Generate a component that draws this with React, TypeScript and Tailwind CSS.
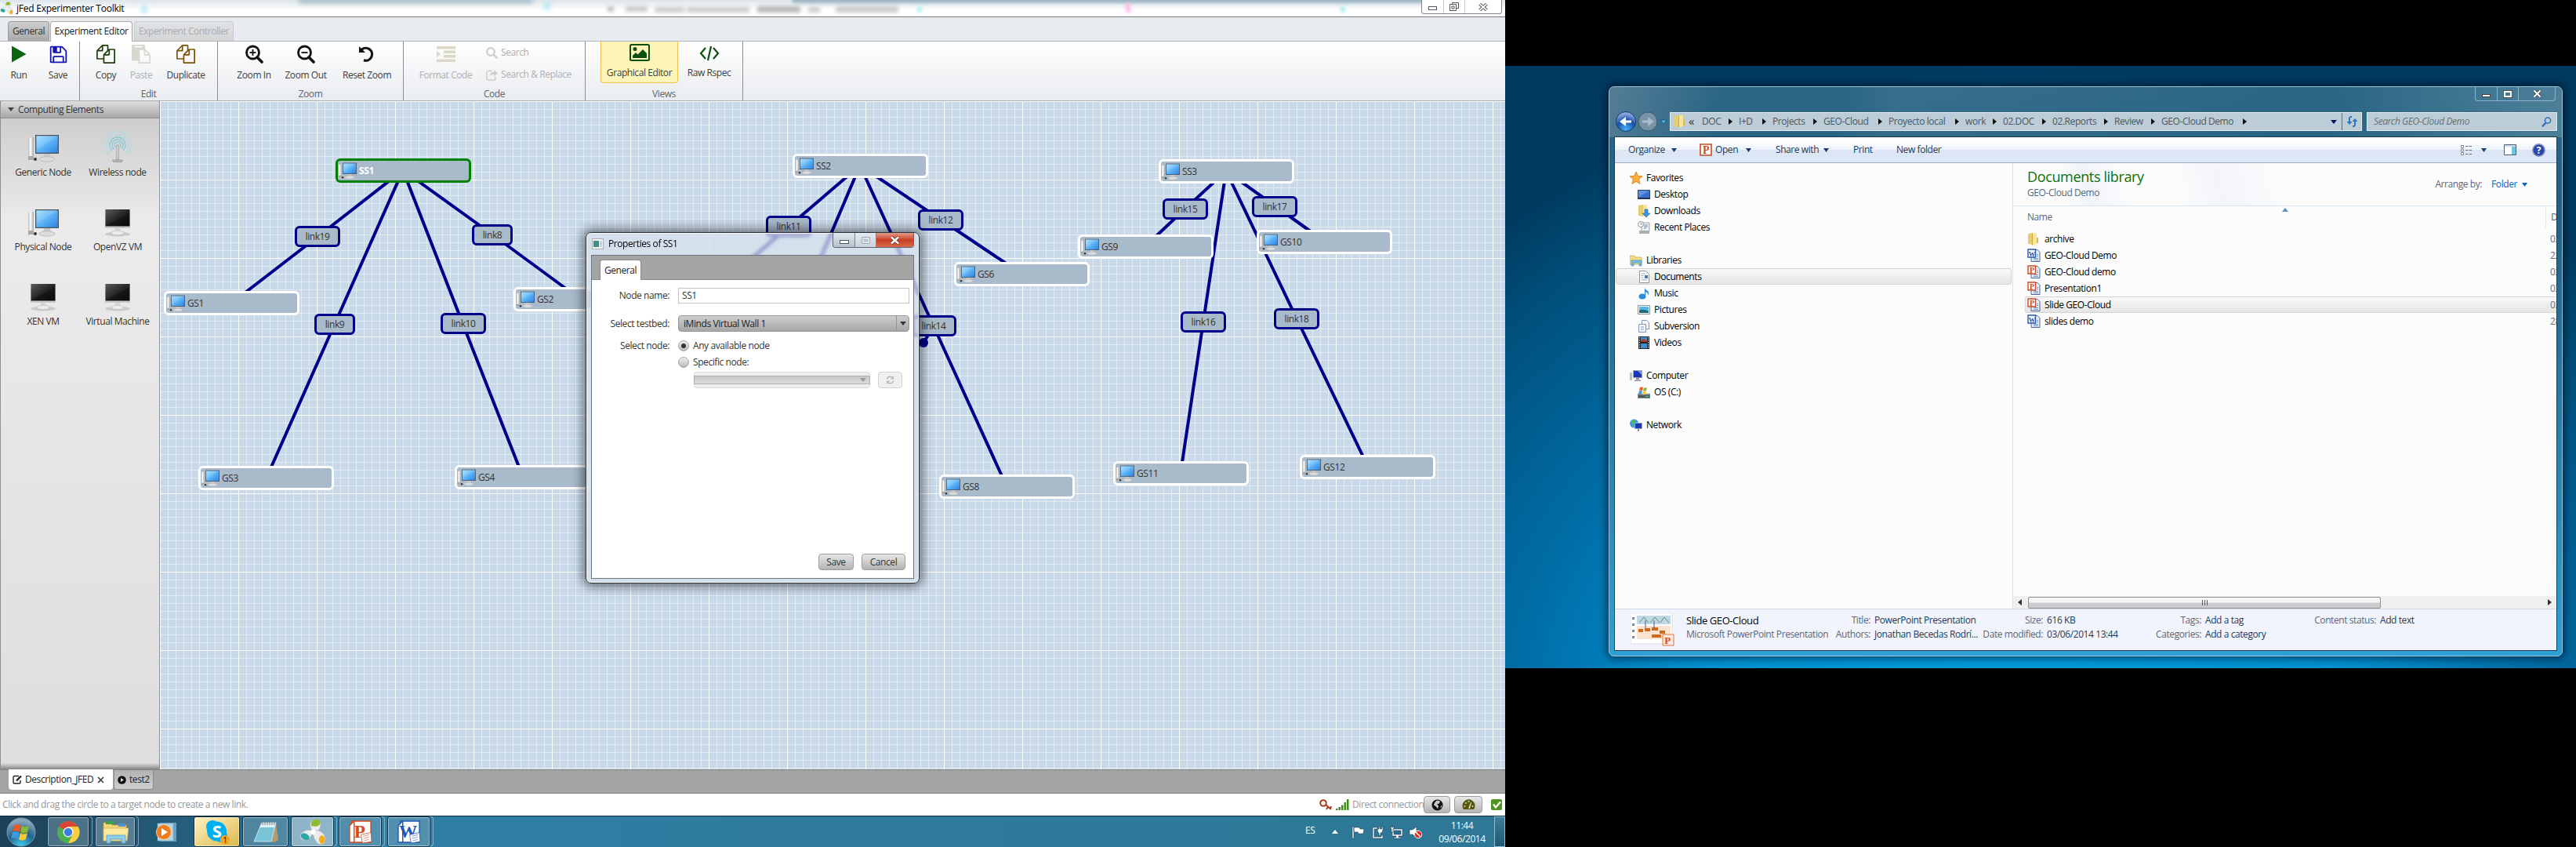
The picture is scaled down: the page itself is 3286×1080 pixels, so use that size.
import React from "react";

/* ---------- shared drawing ---------- */

function ComputerIcon({ size = 40 }: { size?: number }) {
  return (
    <svg width={size} height={size * 0.9} viewBox="0 0 40 36" className="shrink-0">
      <defs>
        <linearGradient id="scr" x1="0" y1="0" x2="1" y2="1">
          <stop offset="0" stopColor="#9fdcff" />
          <stop offset="0.5" stopColor="#5cb4f8" />
          <stop offset="1" stopColor="#2f80e0" />
        </linearGradient>
        <linearGradient id="tower" x1="0" y1="0" x2="1" y2="0">
          <stop offset="0" stopColor="#b8b8b8" />
          <stop offset="0.4" stopColor="#ffffff" />
          <stop offset="1" stopColor="#a8a8a8" />
        </linearGradient>
      </defs>
      <path d="M1 5 L8 4 V33 L1 34 Z" fill="url(#tower)" />
      <path d="M1 28h6v5H1z" fill="#a8a8a8" />
      <circle cx="10" cy="32" r="2" fill="#333" />
      <path d="M21 25h8l1 6H20z" fill="#c8c8c8" />
      <ellipse cx="25" cy="32" rx="10" ry="3.2" fill="#dcdcdc" stroke="#aaa" strokeWidth=".6" />
      <path d="M10 1h30v24H10z" fill="#4c545c" />
      <path d="M11.300 2.300h27.400v21.400h-27.400z" fill="url(#scr)" />
      <path d="M11.500 2.500h27L11.500 20z" fill="#fff" opacity=".12" />
    </svg>
  );
}

function DarkMonitor() {
  return (
    <svg width="34" height="36" viewBox="0 0 34 36">
      <defs>
        <linearGradient id="dk" x1="0" y1="0" x2="1" y2="1">
          <stop offset="0" stopColor="#5c5d55" />
          <stop offset="0.5" stopColor="#262626" />
          <stop offset="1" stopColor="#101010" />
        </linearGradient>
      </defs>
      <ellipse cx="17" cy="32.500" rx="16" ry="3" fill="#bdbdbd" opacity=".7" />
      <path d="M1 1h32v24H1z" fill="#c8c8c8" />
      <path d="M1.500 1h31v21.500h-31z" fill="url(#dk)" />
      <path d="M2 22 L32 5V22z" fill="#000" opacity=".35" />
      <path d="M14 25h6v4h-6z" fill="#d6d6d6" />
      <ellipse cx="17" cy="31" rx="8" ry="2.800" fill="#ececec" stroke="#b5b5b5" strokeWidth=".6" />
    </svg>
  );
}

function WirelessIcon() {
  return (
    <svg width="36" height="40" viewBox="0 0 36 40" fill="none">
      {[4, 7, 10, 13.500, 17].map((r, i) => (
        <path
          key={r}
          d={`M${18 - r * 0.7} ${18 + r * 0.7}A${r} ${r} 0 1 1 ${18 + r * 0.7} ${18 + r * 0.7}`}
          stroke={i > 2 ? "#a5dbe6" : "#7ccbdb"}
          strokeWidth="1.100"
          strokeDasharray={i > 2 ? "3 1" : undefined}
        />
      ))}
      <path d="M16.800 18h2.500v18.500h-2.500z" fill="#d6d6dd" stroke="#85858f" strokeWidth=".6" />
      <path d="M11.500 37h13l-1 2.500h-11z" fill="#b9b9c2" stroke="#777" strokeWidth=".5" />
    </svg>
  );
}

const FILES =
  "M1696 384q40 0 68 28t28 68v1216q0 40-28 68t-68 28h-960q-40 0-68-28t-28-68v-288h-544q-40 0-68-28t-28-68v-672q0-40 20-88t48-76l408-408q28-28 76-48t88-20h416q40 0 68 28t28 68v328q68-40 128-40h416zm-544 213l-299 299h299v-299zm-640-384l-299 299h299v-299zm196 647l316-316v-416h-384v416q0 40-28 68t-68 28h-416v640h512v-256q0-40 20-88t48-76zm956 804v-1152h-384v416q0 40-28 68t-68 28h-416v640h896z";
const FLOPPY =
  "M512 1536h768v-384h-768v384zm896 0h128v-896q0-14-10-38.500t-20-34.500l-281-281q-10-10-34-20t-39-10v416q0 40-28 68t-68 28h-576q-40 0-68-28t-28-68v-416h-128v1280h128v-416q0-40 28-68t68-28h832q40 0 68 28t28 68v416zm-384-928v-320q0-13-9.500-22.500t-22.500-9.500h-192q-13 0-22.500 9.500t-9.500 22.500v320q0 13 9.500 22.500t22.500 9.500h192q13 0 22.500-9.500t9.500-22.500zm640 32v928q0 40-28 68t-68 28h-1344q-40 0-68-28t-28-68v-1344q0-40 28-68t68-28h928q40 0 88 20t76 48l280 280q28 28 48 76t20 88z";
const PASTE =
  "M768 1664h896v-640h-416q-40 0-68-28t-28-68v-416h-384v1152zm256-1440v-64q0-13-9.500-22.500t-22.500-9.500h-704q-13 0-22.500 9.500t-9.500 22.500v64q0 13 9.500 22.500t22.500 9.500h704q13 0 22.500-9.500t9.500-22.500zm256 672h299l-299-299v299zm512 128v672q0 40-28 68t-68 28h-960q-40 0-68-28t-28-68v-160h-544q-40 0-68-28t-28-68v-1344q0-40 28-68t68-28h1088q40 0 68 28t28 68v328q21 13 36 28l408 408q28 28 48 76t20 88z";

function Glyph({ d, color, size = 24 }: { d: string; color: string; size?: number }) {
  return (
    <svg width={size} height={size} viewBox="0 0 1792 1792">
      <path d={d} fill={color} />
    </svg>
  );
}

function Magnifier({ sign }: { sign: "plus" | "minus" }) {
  return (
    <svg width="24" height="24" viewBox="0 0 24 24" fill="none" stroke="#111">
      <circle cx="10.500" cy="10" r="8" strokeWidth="2.800" />
      <path d="M16 16l6 6" strokeWidth="3.600" strokeLinecap="round" />
      <path d="M6.500 10h8" strokeWidth="1.800" />
      {sign === "plus" && <path d="M10.500 6v8" strokeWidth="1.800" />}
    </svg>
  );
}

function Down({ color = "#1e3a6b", w = 7 }: { color?: string; w?: number }) {
  return (
    <svg width={w} height="5" viewBox="0 0 7 5" preserveAspectRatio="none" className="shrink-0">
      <path d="M0 0h7L3.500 5z" fill={color} />
    </svg>
  );
}

function JfedLogo({ size = 18 }: { size?: number }) {
  return (
    <svg width={size} height={size} viewBox="0 0 32 32" className="relative shrink-0">
      <g stroke="#b5b5b5" strokeWidth=".7" fill="#ececef">
        <path d="M14 12C11 5 15 1 19 1c6 0 8 6 5 11-2 4-7 5-10 0z" />
        <path d="M15 15c0 7-4 11-8 11-6 0-8-6-4-9 3-3 9-5 12-2z" />
        <path d="M17 14c7-1 13 3 14 9 1 7-4 9-8 7-5-3-8-12-6-16z" />
      </g>
      <circle cx="16.500" cy="16" r="3" fill="#fff" />
      <path d="M14.500 9C13 4 16 1 19.500 1c3 0 6 1 5.500 5-3 4-7 3-10.500 3z" fill="#8dbb2c" />
      <ellipse cx="7" cy="21.500" rx="5.500" ry="3.800" fill="#28a8a8" transform="rotate(25 7 21)" />
      <ellipse cx="27" cy="25" rx="3.600" ry="5" fill="#f4ab18" />
    </svg>
  );
}

/* ---------- ribbon ---------- */

function Tool({
  label,
  w,
  children,
  dim,
}: {
  label: string;
  w: string;
  children: React.ReactNode;
  dim?: boolean;
}) {
  return (
    <div className={`flex flex-col items-center pt-1 ${w}`}>
      <div className="flex h-6 items-center justify-center">{children}</div>
      <span className={`mt-1.5 whitespace-nowrap leading-[17px] ${dim ? "text-[#adb0b3]" : "text-[#3c4043]"}`}>{label}</span>
    </div>
  );
}

function Group({ w, label, children }: { w: string; label?: string; children: React.ReactNode }) {
  return (
    <div className={`flex h-full flex-col justify-between border-r border-[#8b8e93] ${w}`}>
      <div className="flex">{children}</div>
      <div className="h-4 text-center leading-[15px] text-[#5d6470]">{label}</div>
    </div>
  );
}

function Ribbon() {
  return (
    <div className="flex h-[76px] shrink-0 border-b border-[#a9acb0] bg-linear-to-b from-white via-[#f4f5f7] to-[#e9ecf0]">
      <Group w="w-[102px]">
        <Tool label="Run" w="w-12">
          <svg width="20" height="24" viewBox="0 0 20 24">
            <path d="M1 1.500L19.500 12 1 22.500z" fill="#0a6410" />
          </svg>
        </Tool>
        <Tool label="Save" w="w-[52px]">
          <Glyph d={FLOPPY} color="#1414b4" size={25} />
        </Tool>
      </Group>
      <Group w="w-[176px]" label="Edit">
        <Tool label="Copy" w="ml-2 w-[50px]">
          <Glyph d={FILES} color="#1f3d0a" />
        </Tool>
        <Tool label="Paste" w="w-10" dim>
          <Glyph d={PASTE} color="#d5d8cf" />
        </Tool>
        <Tool label="Duplicate" w="w-[74px]">
          <Glyph d={FILES} color="#7a5208" />
        </Tool>
      </Group>
      <Group w="w-[237px]" label="Zoom">
        <Tool label="Zoom In" w="ml-[13px] w-[66px]">
          <Magnifier sign="plus" />
        </Tool>
        <Tool label="Zoom Out" w="w-[66px]">
          <Magnifier sign="minus" />
        </Tool>
        <Tool label="Reset Zoom" w="w-[90px]">
          <svg width="22" height="22" viewBox="0 0 22 22" fill="none">
            <path d="M4 5.500A8 8 0 1 1 7 18.800" stroke="#111" strokeWidth="3.200" />
            <path d="M1 1v8h8z" fill="#111" />
          </svg>
        </Tool>
      </Group>
      <Group w="w-[232px]" label="Code">
        <Tool label="Format Code" w="ml-[14px] w-[79px]" dim>
          <svg width="24" height="20" viewBox="0 0 24 20" fill="#dcd8c8">
            <path d="M0 0h24v3.500H0zM9 5.500h15V9H9zM9 11h15v3.500H9zM0 16.500h24V20H0zM0 5.500l5 4.500-5 4.500z" />
          </svg>
        </Tool>
        <div className="ml-3 flex flex-col gap-2.5 whitespace-nowrap pt-[5px] text-[#adb0b3]">
          <div className="flex h-[18px] items-center gap-1">
            <svg width="15" height="15" viewBox="0 0 15 15" fill="none" stroke="#cdcdca" strokeWidth="2.300">
              <circle cx="6" cy="6" r="4.800" />
              <path d="M9.500 9.500l5 5" />
            </svg>
            Search
          </div>
          <div className="flex h-[18px] items-center gap-1">
            <svg width="15" height="15" viewBox="0 0 15 15" fill="none" stroke="#cdcdca" strokeWidth="1.500">
              <path d="M8 2.500H3Q1 2.500 1 4.500V12q0 2 2 2h7q2 0 2-2v-2" />
              <path d="M5 9c0-4 2-5 5-5V1l5 4.500-5 4V7c-3 0-4 .5-5 2z" fill="#cdcdca" stroke="none" />
            </svg>
            Search &amp; Replace
          </div>
        </div>
      </Group>
      <Group w="w-[201px]" label="Views">
        <div className="ml-[19px] flex h-[53px] w-[99px] flex-col items-center rounded-b border border-t-0 border-[#f3c04b] bg-[#fdf4b8] pt-[3px]">
          <svg width="26" height="22" viewBox="0 0 26 22">
            <rect x="1" y="1" width="24" height="20" rx="1.500" fill="none" stroke="#0c4f10" strokeWidth="2" />
            <circle cx="7" cy="6.500" r="2.500" fill="#0c4f10" />
            <path d="M4 18v-3l4-4 2.500 2.500L17 7l5 5v6z" fill="#0c4f10" />
          </svg>
          <span className="mt-1.5 whitespace-nowrap leading-[17px] text-[#3c4043]">Graphical Editor</span>
        </div>
        <div className="flex w-[79px] flex-col items-center pt-[4px]">
          <svg width="26" height="22" viewBox="0 0 26 22" fill="none" stroke="#0c4f10" strokeWidth="2.200">
            <path d="M8 4L2 11l6 7M18 4l6 7-6 7M15 2l-4 18" />
          </svg>
          <span className="mt-[5px] leading-[17px] text-[#3c4043]">Raw Rspec</span>
        </div>
      </Group>
    </div>
  );
}

/* ---------- canvas ---------- */

const nodes: [string, number, number][] = [
  ["SS1", 428, 202],
  ["SS2", 1011, 196],
  ["SS3", 1478, 203],
  ["GS1", 209, 371],
  ["GS2", 655, 366],
  ["GS3", 253, 594],
  ["GS4", 580, 593],
  ["GS6", 1217, 334],
  ["GS8", 1198, 605],
  ["GS9", 1375, 299],
  ["GS10", 1603, 293],
  ["GS11", 1420, 588],
  ["GS12", 1658, 580],
];

const links: [string, number, number, number][] = [
  ["link19", 376, 288, 58],
  ["link9", 401, 400, 52],
  ["link8", 602, 286, 52],
  ["link10", 562, 399, 58],
  ["link11", 977, 275, 58],
  ["link12", 1171, 267, 58],
  ["link14", 1162, 402, 58],
  ["link15", 1483, 253, 58],
  ["link16", 1506, 397, 58],
  ["link17", 1597, 250, 58],
  ["link18", 1625, 393, 58],
];

const wires = [
  "514,217 405,302 296,386",
  "514,217 427,413 340,609",
  "514,217 628,299 741,382",
  "514,217 590,412 667,608",
  "1097,211 1006,289 915,367",
  "1097,211 1012,411 930,610",
  "1097,211 1200,280 1303,349",
  "1097,211 1191,416 1284,620",
  "1564,218 1512,266 1461,314",
  "1564,218 1535,410 1506,603",
  "1564,218 1627,263 1690,308",
  "1564,218 1654,406 1745,595",
  "1191,416 1178,437",
];

const gridStyle: React.CSSProperties = {
  backgroundImage:
    "linear-gradient(#fff 1px, transparent 1px), linear-gradient(90deg, #fff 1px, transparent 1px), linear-gradient(#e2ebf4 1px, transparent 1px), linear-gradient(90deg, #e2ebf4 1px, transparent 1px)",
  backgroundSize: "100px 100px, 100px 100px, 10px 10px, 10px 10px",
};

function Canvas() {
  return (
    <div className="relative flex-1 overflow-hidden bg-[#c8d9ea]" style={gridStyle}>
      <svg className="absolute inset-0" width="1716" height="852" viewBox="204 129 1716 852">
        {wires.map((p) => (
          <polyline key={p} points={p} fill="none" stroke="#00008b" strokeWidth="4" />
        ))}
        <circle cx="1178" cy="437" r="6" fill="#00008b" />
      </svg>
      {links.map(([t, x, y, w]) => (
        <div
          key={t}
          className="absolute flex h-[27px] items-center justify-center rounded-md border-[3px] border-[#00008b] bg-[#a9bacb] text-[#333]"
          style={{ left: x - 204, top: y - 129, width: w }}
        >
          {t}
        </div>
      ))}
      {nodes.map(([t, x, y]) => (
        <div
          key={t}
          className={`absolute flex h-[31px] w-[173px] items-center gap-[3px] rounded-md border-[3px] bg-[#a9bacb] ${
            t === "SS1" ? "border-[#008000] font-bold text-white" : "border-white text-[#333]"
          }`}
          style={{ left: x - 204, top: y - 129 }}
        >
          <ComputerIcon size={24} />
          <span className="pt-px">{t}</span>
        </div>
      ))}
    </div>
  );
}

/* ---------- properties dialog ---------- */

function Refresh() {
  return (
    <svg width="11" height="11" viewBox="0 0 12 12" fill="none" stroke="#b9b9b9" strokeWidth="1.800">
      <path d="M1.500 5A4.600 4.600 0 0 1 9.500 3M10.500 7A4.600 4.600 0 0 1 2.500 9" />
      <path d="M11 0v5H6zM1 12V7h5z" fill="#b9b9b9" stroke="none" />
    </svg>
  );
}

const btn =
  "flex h-[21px] items-center justify-center rounded border border-[#9d9d9d] bg-linear-to-b from-[#e8e8e8] to-[#b4b4b4] text-[#333]";

function Dialog() {
  return (
    <div className="absolute left-[747px] top-[296px] flex h-[448px] w-[426px] flex-col rounded-[7px] border border-[#2a3138] bg-[#d8e2ec]/65 px-[6px] pb-[5px] shadow-[0_0_14px_4px_rgba(0,0,0,0.5),inset_0_0_0_1px_rgba(255,255,255,0.8)] backdrop-blur-[2px]">
      <div className="flex h-7 shrink-0 items-start">
        <svg width="15" height="14" viewBox="0 0 15 14" className="ml-px mt-[7px]">
          <rect x=".5" y=".5" width="14" height="13" fill="#f4f4f4" stroke="#a8adb2" />
          <path d="M2 3h7v8H2z" fill="#3b9183" />
          <path d="M10 3h3v8h-3z" fill="#bcd4e4" />
        </svg>
        <span className="ml-[6px] mt-[5px] text-[12px] leading-[18px] text-black">Properties of SS1</span>
        <div className="ml-auto flex h-[19px] overflow-hidden rounded-b border border-t-0 border-[#5d6773]">
          <div className="flex w-7 items-center justify-center border-r border-[#7c8794] bg-linear-to-b from-[#e4eaf0] to-[#b4bfca] pt-1">
            <div className="h-[5px] w-3 border border-[#4c5560] bg-white" />
          </div>
          <div className="flex w-[27px] items-center justify-center border-r border-[#7c8794] bg-linear-to-b from-[#e4eaf0] to-[#c9d2dc]">
            <svg width="11" height="9" viewBox="0 0 11 9" fill="#dfe5ea" stroke="#a3adb7">
              <path d="M.5.5h10v8H.5zM3.500 3.500h4v2h-4z" />
            </svg>
          </div>
          <div className="flex w-[47px] items-center justify-center bg-linear-to-b from-[#e39a86] via-[#c83d24] to-[#d8694c]">
            <svg width="13" height="11" viewBox="0 0 13 11">
              <path d="M2 1.500l9 8M11 1.500l-9 8" stroke="#5a2018" strokeWidth="4" />
              <path d="M2 1.500l9 8M11 1.500l-9 8" stroke="#fff" strokeWidth="2.600" />
            </svg>
          </div>
        </div>
      </div>
      <div className="flex flex-1 flex-col border border-[#6c757f] bg-white">
        <div className="flex h-[31px] shrink-0 items-end border-b border-[#8a8a8a] bg-[#a4a4a4] pl-2.5">
          <div className="-mb-px flex h-[26px] w-[53px] items-center justify-center rounded-t border border-b-0 border-[#8a8a8a] bg-white text-[#222]">
            General
          </div>
        </div>
        <div className="grid grid-cols-[99px_295px] gap-x-[11px] whitespace-nowrap pt-[10px] text-[#333]">
          <span className="flex h-5 items-center justify-end">Node name:</span>
          <div className="flex h-5 items-center border border-[#c6c6c6] bg-white pl-1">SS1</div>
          <span className="mt-[15px] flex h-[21px] items-center justify-end">Select testbed:</span>
          <div className="mt-[15px] flex h-[21px] items-center rounded border border-[#999] bg-linear-to-b from-[#cecece] to-[#a6a6a6] pl-1.5 text-[#222]">
            <span>iMinds Virtual Wall 1</span>
            <div className="ml-auto flex h-full w-4 items-center justify-center border-l border-[#929292]">
              <Down color="#333" w={8} />
            </div>
          </div>
          <span className="mt-[7px] flex h-[21px] items-center justify-end">Select node:</span>
          <div className="mt-[7px] flex flex-col">
            {["Any available node", "Specific node:"].map((t, i) => (
              <div key={t} className="flex h-[21px] items-center gap-[5px]">
                <div className="flex size-[14px] items-center justify-center rounded-full border border-[#a5a5a5] bg-linear-to-b from-[#eee] to-[#bbb]">
                  {i === 0 && <div className="size-1.5 rounded-full bg-[#333]" />}
                </div>
                {t}
              </div>
            ))}
            <div className="mt-[2px] flex pl-[20px]">
              <div className="flex h-[21px] w-[225px] items-center rounded border border-[#dadada] bg-[#eee]">
                <div className="-mx-px flex h-[11px] flex-1 items-center justify-end border border-[#aeaeae] bg-linear-to-b from-[#c9c9c9] to-[#dcdcdc] pr-1">
                  <Down color="#999" w={8} />
                </div>
              </div>
              <div className="ml-2.5 flex h-[21px] w-[31px] items-center justify-center rounded border border-[#d2d2d2] bg-[#f0f0f0]">
                <Refresh />
              </div>
            </div>
          </div>
        </div>
        <div className="mb-2.5 mr-2.5 mt-auto flex justify-end gap-2.5">
          <div className={`${btn} w-[45px]`}>Save</div>
          <div className={`${btn} w-14`}>Cancel</div>
        </div>
      </div>
    </div>
  );
}

/* ---------- taskbar ---------- */

function Task({ cls, children, stack }: { cls: string; children?: React.ReactNode; stack?: boolean }) {
  return (
    <div className="flex h-full">
      <div
        className={`flex h-[39px] items-center justify-center rounded-[3px] border border-[#12344a] shadow-[inset_0_0_0_1px_rgba(255,255,255,0.45)] ${cls}`}
      >
        {children}
      </div>
      {stack && <div className="h-[38px] w-1 rounded-r border border-l-0 border-[#b7d5e4]/60" />}
    </div>
  );
}

function OfficeTile({ letter, color, size }: { letter: string; color: string; size: number }) {
  return (
    <svg width={size} height={size} viewBox="0 0 32 32" className="shrink-0">
      <path d="M5 2H30V30H5z" fill="#fff" stroke={color} strokeWidth="1.500" />
      <path d="M2 8L8 2v28H2z" fill="#fff" stroke={color} strokeWidth="1.500" />
      <text x="15" y="24" textAnchor="middle" fontFamily="Liberation Serif, serif" fontSize="24" fontWeight="700" fill={color}>
        {letter}
      </text>
      <path d="M17 20l13-3 1 12-12 2z" fill="#fff" stroke={color} strokeWidth=".8" />
      <path d="M20 22l8-2M20 25l8-2M21 28l7-2" stroke={color} strokeWidth="1" opacity=".6" />
    </svg>
  );
}

function Taskbar() {
  return (
    <div className="flex h-10 shrink-0 items-stretch border-t border-[#0d2836] bg-linear-to-r from-[#1c4157] from-0% via-[#2f7ea5] via-25% to-[#2e7795] text-white">
      <div className="flex w-[60px] items-center justify-center pr-[6px]">
        <svg width="38" height="38" viewBox="0 0 38 38">
          <defs>
            <radialGradient id="orb" cx=".5" cy="1" r=".9">
              <stop offset="0" stopColor="#3fd2f5" />
              <stop offset=".55" stopColor="#21628c" />
              <stop offset="1" stopColor="#8aa6b8" />
            </radialGradient>
          </defs>
          <circle cx="19" cy="19" r="18" fill="url(#orb)" stroke="#6f9ab0" />
          <path d="M10 10q5-2 9 1l-2 8q-4-3-9-1z" fill="#ea5a24" />
          <path d="M20 11q4 3 9 0l-2 8q-5 3-9 0z" fill="#86bc2e" />
          <path d="M8 19q5-2 9 1l-2 8q-4-3-9-1z" fill="#3c9be0" />
          <path d="M18 20q4 3 9 0l-2 8q-5 3-9 0z" fill="#fbc832" />
        </svg>
      </div>
      <Task cls="w-[54px] bg-[#5f8296]/70" stack>
        <svg width="30" height="30" viewBox="0 0 30 30">
          <circle cx="15" cy="15" r="14" fill="#4caf50" />
          <path d="M15 15L2.900 8A14 14 0 0 1 27.100 8H15z" fill="#de4334" />
          <path d="M15 15l6 3-6 11A14 14 0 0 0 27.600 8H15z" fill="#fdd042" />
          <circle cx="15" cy="15" r="6.500" fill="#fff" />
          <circle cx="15" cy="15" r="5.200" fill="#3b7de0" />
        </svg>
      </Task>
      <div className="ml-[3px]">
        <Task cls="w-[52px] bg-[#6c8e9f]/70" stack>
          <svg width="33" height="30" viewBox="0 0 33 30">
            <path d="M1 3h9l2 3h18v20H1z" fill="#f1d675" stroke="#c5a548" strokeWidth=".7" />
            <path d="M4 1h10v4H4z" fill="#3aa546" />
            <path d="M20 4h9v4h-9z" fill="#4b92db" />
            <path d="M1 10h32l-2 16H1z" fill="#fbe99f" stroke="#cdb05a" strokeWidth=".7" />
            <path d="M5 29V19h24v10h-5v-5H10v5z" fill="#8fcdeb" stroke="#4d9dc6" strokeWidth=".8" />
          </svg>
        </Task>
      </div>
      <div className="flex w-[70px] items-center justify-center">
        <svg width="28" height="26" viewBox="0 0 28 26">
          <path d="M6 1h21v24H6z" fill="#7ab2d6" opacity=".8" />
          <path d="M3 2h20v22H3z" fill="#b4d4e8" stroke="#7ca8c4" strokeWidth=".6" />
          <circle cx="11" cy="13" r="9.500" fill="#f07c1c" stroke="#fcd2a0" />
          <path d="M8 8l8 5-8 5z" fill="#fff" />
        </svg>
      </div>
      <Task cls="w-[59px] bg-linear-to-br from-[#fff3c0] to-[#dcb84a]">
        <svg width="32" height="34" viewBox="0 0 32 34">
          <circle cx="10" cy="10" r="8" fill="#00aff0" />
          <circle cx="21" cy="22" r="8" fill="#00aff0" />
          <circle cx="15.500" cy="16" r="12.500" fill="#00aff0" />
          <text x="15.500" y="24" textAnchor="middle" fontFamily="Open Sans, sans-serif" fontWeight="700" fontSize="22" fill="#fff">
            S
          </text>
          <circle cx="26" cy="27" r="6" fill="#f9a51c" />
          <text x="26" y="31" textAnchor="middle" fontFamily="Open Sans, sans-serif" fontSize="11" fill="#222">
            1
          </text>
        </svg>
      </Task>
      <div className="ml-[3px]">
        <Task cls="w-[59px] bg-[#6b97ad]/60">
          <svg width="32" height="30" viewBox="0 0 32 30">
            <path d="M11 3h18l3 22-5 3H24z" fill="#b59a69" />
            <path d="M11 3h18l-6 24H1z" fill="#79c3d6" stroke="#d9eef3" strokeWidth=".8" />
            <path d="M11 3h18l-2 6H8z" fill="#dff2f6" />
            <path d="M12 2v4M15 2v4M18 2v4M21 2v4M24 2v4M27 2v4" stroke="#777" />
          </svg>
        </Task>
      </div>
      <div className="ml-[3px]">
        <Task cls="w-[55px] bg-[#a9c6d4]/80" stack>
          <JfedLogo size={34} />
        </Task>
      </div>
      <div className="ml-[2px]">
        <Task cls="w-[55px] bg-[#6b9db5]/60" stack>
          <OfficeTile letter="P" color="#d24a1e" size={31} />
        </Task>
      </div>
      <div className="ml-[3px]">
        <Task cls="w-[55px] bg-[#6b9db5]/60" stack>
          <OfficeTile letter="W" color="#2257b8" size={31} />
        </Task>
      </div>
      <div className="ml-auto flex items-center">
        <span className="w-[34px] pb-1">ES</span>
        <svg width="8" height="5" viewBox="0 0 8 5" className="mr-[17px]">
          <path d="M0 5l4-5 4 5z" fill="#fff" />
        </svg>
        <svg width="92" height="18" viewBox="0 0 92 18" className="mr-[16px]">
          <g fill="#fff" stroke="#1b4257" strokeWidth=".6">
            <path d="M1 2h2v15H1zM3 3h7l1 2h5l-1 6H9L8 9H3z" />
            <path d="M27 3h6v2h-4v10h9v-2h2v4H27z" />
            <path d="M33 5h2V2h1.500v3h2V2H40v4q0 4-3 4v3h-2v-3q-2-1-2-5z" />
            <path d="M52 5h13v9h-5v1.500h3V17h-9v-1.500h3V14h-5z" />
            <path d="M54 7h9v5h-9z" fill="#2c6b8a" />
            <path d="M50 1h1v2h2V1h1v4h-1v4h-2V5h-1z" />
            <path d="M74 6h4l5-4v14l-5-4h-4z" />
          </g>
          <circle cx="85" cy="12" r="4.700" fill="#e02a24" stroke="#fff" />
          <path d="M82 9l6 6" stroke="#fff" strokeWidth="1.500" />
        </svg>
        <div className="w-[66px] text-center leading-[17px]">
          <div>11:44</div>
          <div>09/06/2014</div>
        </div>
      </div>
      <div className="ml-[8px] w-[14px] border border-[#8fbfd2] bg-linear-to-b from-[#3f7d98] to-[#1f5871]" />
    </div>
  );
}

/* ---------- left screen ---------- */

const palette: [string, "pc" | "wifi" | "vm"][] = [
  ["Generic Node", "pc"],
  ["Wireless node", "wifi"],
  ["Physical Node", "pc"],
  ["OpenVZ VM", "vm"],
  ["XEN VM", "vm"],
  ["Virtual Machine", "vm"],
];

function LeftScreen() {
  return (
    <div className="relative flex h-[1080px] w-[1920px] shrink-0 flex-col overflow-hidden bg-white">
      <div className="relative flex h-[22px] shrink-0 items-center overflow-hidden border-b border-[#777b80] bg-linear-to-b from-[#dde5ea] to-white to-60%">
        <div className="absolute left-[380px] -top-0.5 h-1.5 w-[300px] rounded-full bg-[#6d8fa3]/60 blur-[3px]" />
        <div className="absolute left-[1010px] -top-1 h-2 w-[820px] rounded-full bg-[#7f9fb4]/70 blur-[2px]" />
        <div className="absolute left-[180px] top-2 size-2 rounded-full bg-[#9fe3f5] blur-[3px]" />
        <div className="absolute left-[694px] top-1 size-2 rounded-full bg-[#9fe3f5] blur-[3px]" />
        <div className="absolute left-[1436px] top-1 h-3 w-1.5 rounded-full bg-[#ffb7e4] blur-[2px]" />
        <div className="absolute left-[1170px] top-2 h-2 w-1.5 rounded-full bg-[#a8edf0] blur-[2px]" />
        <div className="absolute left-[1710px] top-2 h-2 w-1.5 rounded-full bg-[#a8edf0] blur-[2px]" />
        <div className="absolute left-[775px] top-[8px] h-[7px] w-2 bg-[#999] opacity-60 blur-[2px]" />
        <div className="absolute left-[798px] top-[8px] h-[7px] w-7 bg-[#999] opacity-50 blur-[2.5px]" />
        <div className="absolute left-[835px] top-[9px] h-[7px] w-[38px] bg-[#999] opacity-50 blur-[2.5px]" />
        <div className="absolute left-[876px] top-[9px] h-[7px] w-[80px] bg-[#999] opacity-50 blur-[2.5px]" />
        <div className="absolute left-[966px] top-[8px] h-[8px] w-[55px] bg-[#888] opacity-60 blur-[2.5px]" />
        <div className="absolute left-[1031px] top-[9px] h-[7px] w-[15px] bg-[#999] opacity-50 blur-[2.5px]" />
        <div className="absolute left-[1066px] top-[8px] h-[8px] w-[80px] bg-[#999] opacity-50 blur-[2.5px]" />
        <JfedLogo size={17} />
        <span className="relative ml-1 text-[12px] tracking-[-0.02em] text-black">jFed Experimenter Toolkit</span>
        <div className="relative ml-auto mr-1 flex h-[18px] self-start rounded-b border border-t-0 border-[#80868c] bg-white">
          <div className="flex w-7 items-center justify-center border-r border-[#c5c9cd] pt-1">
            <div className="h-[5px] w-[11px] border border-[#4c5560]" />
          </div>
          <div className="flex w-[27px] items-center justify-center border-r border-[#c5c9cd]">
            <svg width="12" height="11" viewBox="0 0 12 11" fill="#fff" stroke="#4c5560">
              <path d="M3.500.5h8v7h-8z" />
              <path d="M.5 2.500h8v8h-8zM3 5h3v3H3z" />
            </svg>
          </div>
          <div className="flex w-[46px] items-center justify-center">
            <svg width="12" height="10" viewBox="0 0 12 10">
              <path d="M1.500 1l9 8M10.500 1l-9 8" stroke="#4c5560" strokeWidth="3.800" />
              <path d="M1.500 1l9 8M10.500 1l-9 8" stroke="#fff" strokeWidth="1.700" />
            </svg>
          </div>
        </div>
      </div>
      <div className="flex h-[31px] shrink-0 items-end border-b border-[#b2b5b9] bg-[#e8ebf0] pl-2.5">
        <div className="flex h-[25px] w-[53px] items-center justify-center rounded-t border border-b-0 border-[#999] bg-linear-to-b from-[#cfcfcf] to-[#a9a9a9] text-[#333]">
          General
        </div>
        <div className="ml-px -mb-px flex h-[26px] w-[105px] items-center justify-center rounded-t border border-b-0 border-[#aaa] bg-white pb-px text-[#222]">
          Experiment Editor
        </div>
        <div className="ml-[2px] flex h-[25px] w-[127px] items-center justify-center rounded-t border border-b-0 border-[#c9cbce] bg-linear-to-b from-[#e2e3e6] to-[#d2d4d6] text-[#a9abae]">
          Experiment Controller
        </div>
      </div>
      <Ribbon />
      <div className="flex min-h-0 flex-1">
        <div className="flex w-[204px] shrink-0 flex-col border-x border-[#8f8f8f] bg-linear-to-b from-[#c9c9c9] via-[#ebebeb] via-18% to-[#dedede]">
          <div className="flex h-[22px] items-center gap-[5px] rounded-t border-b border-[#8f8f8f] bg-linear-to-b from-[#dedede] to-[#a8a8a8] pl-[9px] text-[#333]">
            <Down color="#444" w={8} />
            Computing Elements
          </div>
          <div className="mt-[17px] grid auto-rows-[95px] grid-cols-[108px_82px] text-[#333]">
            {palette.map(([t, k]) => (
              <div key={t} className="flex flex-col items-center">
                <div className="flex h-[39px] items-end justify-center">
                  {k === "pc" ? <ComputerIcon size={40} /> : k === "wifi" ? <WirelessIcon /> : <DarkMonitor />}
                </div>
                <span className="mt-[4px] whitespace-nowrap leading-[18px]">{t}</span>
              </div>
            ))}
          </div>
          <div className="mt-auto h-2 bg-linear-to-b from-transparent to-[#858585]" />
        </div>
        <Canvas />
      </div>
      <div className="flex h-[31px] shrink-0 items-start border-y border-[#858585] bg-[#a4a4a4] pl-[11px] text-[#222]">
        <div className="-mt-px flex h-[26px] w-[133px] items-center rounded-b bg-white pl-[5px]">
          <svg width="13" height="12" viewBox="0 0 13 12" fill="none" stroke="#222">
            <path d="M8 1.500H2.500q-1.500 0-1.500 1.500v6.500Q1 11 2.500 11h6q1.500 0 1.500-1.500V7" strokeWidth="1.400" />
            <path d="M5 7.500l6-6" strokeWidth="2.400" />
          </svg>
          <span className="ml-[3px]">Description_JFED</span>
          <svg width="9" height="9" viewBox="0 0 9 9" className="ml-[5px]">
            <path d="M1 1l7 7M8 1l-7 7" stroke="#333" strokeWidth="1.500" />
          </svg>
        </div>
        <div className="ml-px flex h-[25px] w-[51px] items-center gap-1 rounded-b border border-t-0 border-[#8c8c8c] bg-linear-to-b from-[#b2b2b2] to-[#cfcfcf] pl-1">
          <svg width="11" height="11" viewBox="0 0 11 11" className="shrink-0">
            <circle cx="5.500" cy="5.500" r="5.300" fill="#111" />
            <path d="M4 3l4 2.500L4 8z" fill="#ddd" />
          </svg>
          test2
        </div>
      </div>
      <div className="flex h-7 shrink-0 items-center whitespace-nowrap bg-white pl-[3px] text-[#969696]">
        Click and drag the circle to a target node to create a new link.
        <div className="ml-auto flex items-center pr-1">
          <svg width="17" height="15" viewBox="0 0 17 15" fill="none" stroke="#a83a18" strokeWidth="2">
            <circle cx="5" cy="5" r="3.800" />
            <path d="M8 7l7 6M11 10l-2 3M14 12l1-3" />
          </svg>
          <svg width="17" height="14" viewBox="0 0 17 14" className="ml-1" fill="#3d8c1c">
            <path d="M0 12h2.500v2H0zM3.500 10H6v4H3.500zM7 7.500h2.500V14H7zM10.500 4H13v10h-2.500zM14 0h2.500v14H14z" />
          </svg>
          <span className="ml-1 w-[91px]">Direct connection</span>
          <div className={`${btn} h-[22px] w-[34px]`}>
            <svg width="15" height="15" viewBox="0 0 15 15">
              <circle cx="7.500" cy="7.500" r="7" fill="#111" />
              <path d="M7 1.500l4 1-1 3-3 1 2 2-1 4-2-3-3-2 1-3zM12 8l1.500 1-2 3z" fill="#c9c9c9" />
            </svg>
          </div>
          <div className={`${btn} ml-[5px] h-[22px] w-9`}>
            <svg width="17" height="14" viewBox="0 0 17 14">
              <path d="M2 13A8 8 0 1 1 15 13z" fill="#55590f" />
              <g fill="#d9d9c0">
                <circle cx="3.500" cy="9" r="1" />
                <circle cx="5" cy="5" r="1" />
                <circle cx="8.500" cy="3" r="1" />
                <circle cx="13.500" cy="9" r="1" />
                <path d="M8 12l3-8 1 .5-2 7.500z" />
              </g>
            </svg>
          </div>
          <svg width="14" height="14" viewBox="0 0 14 14" className="ml-[11px]">
            <rect width="14" height="14" rx="2" fill="#4f9423" />
            <path d="M3 6.500l3 4 6-7" fill="none" stroke="#fff" strokeWidth="2.300" />
          </svg>
        </div>
      </div>
      <Taskbar />
      <Dialog />
    </div>
  );
}

/* ---------- file explorer ---------- */

function FolderIcon() {
  return (
    <svg width="14" height="16" viewBox="0 0 14 16" className="shrink-0">
      <path d="M1 1l6-1v15l-6-1z" fill="#e7cd6b" />
      <path d="M7 0h5v14l-5 2z" fill="#f7e59c" />
      <path d="M7 0v16l-1-1V1z" fill="#c8a83e" />
      <path d="M12 6h2v7h-2z" fill="#d9b84c" />
    </svg>
  );
}

function DocIcon({ kind }: { kind: "W" | "P" }) {
  const c = kind === "W" ? "#2455a8" : "#cc4a20";
  return (
    <svg width="17" height="17" viewBox="0 0 17 17" className="shrink-0">
      <path d="M5 1.500h8l3 3v12H5z" fill="#e6eefb" stroke="#47679c" />
      <path d="M8 12.500h6M8 14.500h6M12 7.500h2M12 9.500h2" stroke="#6f93cc" />
      <path d="M1 1h9.500v10H1z" fill="#fff" stroke={c} strokeWidth="1.400" />
      <text x="5.800" y="9.500" textAnchor="middle" fontFamily="Liberation Serif, serif" fontWeight="700" fontSize={kind === "W" ? 8.5 : 10} fill={c}>
        {kind}
      </text>
    </svg>
  );
}

function NavIcon({ kind }: { kind: string }) {
  const art: Record<string, React.ReactNode> = {
    Favorites: <path d="M8 0l2.300 5.300 5.700.5-4.300 3.800 1.300 5.900L8 12.400 3 15.500l1.300-5.900L0 5.800l5.700-.5z" fill="#fbb03a" stroke="#d6761a" strokeWidth=".8" />,
    Desktop: (
      <>
        <path d="M.5 2.500h15v11H.5z" fill="#3a6ed0" stroke="#27406e" />
        <path d="M1 3h14L1 12z" fill="#7ba4ea" opacity=".6" />
        <path d="M0 12h16v2H0z" fill="#27334a" />
      </>
    ),
    Downloads: (
      <>
        <path d="M1 1l6-1v15l-6-1z" fill="#e7cd6b" />
        <path d="M7 0h5v14l-5 1z" fill="#f7e59c" />
        <path d="M9 6h4v5h3l-5 5-5-5h3z" fill="#3b92de" stroke="#1c64a8" strokeWidth=".6" />
      </>
    ),
    "Recent Places": (
      <>
        <path d="M5 2h10v11H5z" fill="#eef2f5" stroke="#9aa3aa" />
        <circle cx="4" cy="4" r="3.500" fill="#fff" stroke="#8a949c" />
        <path d="M4 2v2h2M8 5h5M8 7h5M8 9h3" stroke="#6b8fae" fill="none" />
        <path d="M2 12h13v4H2z" fill="#a9afb3" />
      </>
    ),
    Libraries: (
      <>
        <path d="M0 2h6l1 2h8v9H0z" fill="#f1dc85" stroke="#c8aa4e" strokeWidth=".7" />
        <path d="M2 15V8h13v7h-3v-4H5v4z" fill="#77bfe6" stroke="#3e90bf" strokeWidth=".7" />
      </>
    ),
    Documents: (
      <>
        <path d="M2.500.5h8l4 4v11h-12z" fill="#fff" stroke="#8d959c" />
        <path d="M4.500 4h5M4.500 6.500h3M4.500 9h3M4.500 12h8" stroke="#8fa8c8" />
        <path d="M9 6h4v4H9z" fill="#3b7bb8" />
      </>
    ),
    Music: (
      <>
        <ellipse cx="6" cy="12" rx="4.500" ry="3.500" fill="#2b8edb" />
        <path d="M9 12V0q0 3 4 5 2 3 0 6 .5-4-3-5v6z" fill="#2b8edb" />
      </>
    ),
    Pictures: (
      <>
        <path d="M.5 2.500h15v11H.5z" fill="#fff" stroke="#8b959e" />
        <path d="M2 4h12v8H2z" fill="#59b7e6" />
        <path d="M2 9q5-3 12 1v2H2z" fill="#1f6a78" />
      </>
    ),
    Subversion: (
      <g fill="#f3f7fc" stroke="#7f98b8">
        <path d="M5.500.5h6l3 3v8h-9z" />
        <path d="M1.500 5.500h9v10h-9zM4 9h4M4 12h4" />
      </g>
    ),
    Videos: (
      <>
        <path d="M1 0h14v16H1z" fill="#222" />
        <path d="M4 1h8v6H4zM4 9h8v6H4z" fill="#3d8ed0" />
        <path d="M4 5l4-2 4 3v1H4z" fill="#b33a22" />
        <path d="M2.500 1v14M13.500 1v14" stroke="#fff" strokeDasharray="1.500 1.500" />
      </>
    ),
    Computer: (
      <>
        <path d="M0 4h3v10H0z" fill="#b9c0c5" />
        <path d="M4.500 1.500h11v9h-11z" fill="#1b36b8" stroke="#9aa2aa" />
        <path d="M10 2h5v5z" fill="#6e92f0" />
        <path d="M8 11h4v2H8zM6 13.500h8v1.500H6z" fill="#8a9299" />
      </>
    ),
    "OS (C:)": (
      <>
        <path d="M0 10h16v6H0z" fill="#7c858b" />
        <path d="M1 12h14v3H1z" fill="#4c5a60" />
        <path d="M10 13h4v1h-4z" fill="#3be03b" />
        <path d="M3 2q2-1 4 0L6 6Q4 5 2 6z" fill="#ea5a24" />
        <path d="M8 2q2 1 4 0l-1 4q-2 1-4 0z" fill="#86bc2e" />
        <path d="M2 6.500q2-1 4 0l-1 4q-2-1-4 0z" fill="#3c9be0" />
        <path d="M7 6.500q2 1 4 0l-1 4q-2 1-4 0z" fill="#fbc832" />
      </>
    ),
    Network: (
      <>
        <circle cx="5.500" cy="6" r="5.500" fill="#3f9be0" />
        <path d="M2 3q3-3 5 0-1 3-4 3zM3 8l4-1v4z" fill="#4cbf4c" />
        <path d="M6.500 5.500h9v7h-9z" fill="#1b36b8" stroke="#9aa2aa" />
        <path d="M10 13h2v3h-2z" fill="#8a9299" />
      </>
    ),
  };
  return (
    <svg width="16" height="16" viewBox="0 0 16 16" className="shrink-0">
      {art[kind]}
    </svg>
  );
}

const nav: ([string, number] | null)[] = [
  ["Favorites", 0],
  ["Desktop", 1],
  ["Downloads", 1],
  ["Recent Places", 1],
  null,
  ["Libraries", 0],
  ["Documents", 1],
  ["Music", 1],
  ["Pictures", 1],
  ["Subversion", 1],
  ["Videos", 1],
  null,
  ["Computer", 0],
  ["OS (C:)", 1],
  null,
  ["Network", 0],
];

const crumbs: [string, number][] = [
  ["DOC", 47],
  ["I+D", 43],
  ["Projects", 65],
  ["GEO-Cloud", 83],
  ["Proyecto local", 98],
  ["work", 48],
  ["02.DOC", 63],
  ["02.Reports", 79],
  ["Review", 60],
  ["GEO-Cloud Demo", 117],
];

const files: [string, "F" | "W" | "P", string][] = [
  ["archive", "F", "03"],
  ["GEO-Cloud Demo", "W", "22"],
  ["GEO-Cloud demo", "P", "03"],
  ["Presentation1", "P", "03"],
  ["Slide GEO-Cloud", "P", "03"],
  ["slides demo", "W", "28"],
];

function Field({ label, value }: { label: string; value: string }) {
  return (
    <>
      <span className="flex justify-end text-[#5a6779]">{label}</span>
      <span className="text-[#1e395b]">{value}</span>
    </>
  );
}

function Explorer() {
  return (
    <div className="absolute left-[132px] top-[26px] flex h-[727px] w-[1217px] flex-col rounded-[7px] border border-[#9fc4d8] bg-linear-to-b from-[#2b6685] from-0% via-[#216083] via-20% to-[#2fa0d6] px-[6px] pb-[6px] shadow-[0_0_10px_3px_rgba(0,10,30,0.55)]">
      <div className="pointer-events-none absolute inset-x-0 top-0 h-16 rounded-t-[6px] bg-[linear-gradient(100deg,rgba(160,170,180,0.35),transparent_12%,transparent_24%,rgba(255,255,255,0.06)_30%,transparent_75%,rgba(160,190,200,0.3))]" />
      <div className="relative flex h-[32px] items-start justify-end pr-[2px]">
        <div className="flex h-[18px] rounded-b border border-t-0 border-[#8fb3c6]">
          <div className="flex w-7 items-center justify-center border-r border-[#8fb3c6] pt-1">
            <div className="h-[4px] w-[11px] border border-[#444] bg-white" />
          </div>
          <div className="flex w-[27px] items-center justify-center border-r border-[#8fb3c6]">
            <div className="h-2 w-2.5 border-[2.5px] border-white outline-1 outline-[#555]" />
          </div>
          <div className="flex w-[46px] items-center justify-center">
            <svg width="11" height="9" viewBox="0 0 11 9">
              <path d="M1.500 .5l8 8M9.500 .5l-8 8" stroke="#333" strokeWidth="3.500" />
              <path d="M1.500 .5l8 8M9.500 .5l-8 8" stroke="#fff" strokeWidth="2.200" />
            </svg>
          </div>
        </div>
      </div>
      <div className="relative flex h-[24px] shrink-0 items-center">
        <svg width="68" height="28" viewBox="0 0 68 28" className="shrink-0">
          <defs>
            <radialGradient id="bk" cx=".5" cy=".9" r=".8">
              <stop offset="0" stopColor="#45b4f4" />
              <stop offset=".6" stopColor="#1a4fae" />
              <stop offset="1" stopColor="#8aa7dc" />
            </radialGradient>
          </defs>
          <circle cx="15" cy="14" r="12.500" fill="url(#bk)" stroke="#173a66" />
          <path d="M22 12.500h-7V8l-8 6 8 6v-4.500h7z" fill="#fff" />
          <circle cx="43" cy="14" r="12" fill="#7893a5" stroke="#3c586b" />
          <path d="M36 12.500h7V8l8 6-8 6v-4.500h-7z" fill="#a9bcc8" />
          <path d="M59 12h8l-4 5z" fill="#3ab7ef" stroke="#123a58" strokeWidth=".6" />
        </svg>
        <div className="ml-[3px] flex h-[24px] w-[883px] items-center border border-[#e2edf3] bg-[#bccdd7] pl-1 text-[#4b565e] outline-1 outline-[#3c6980]/60">
          <FolderIcon />
          <span className="ml-[5px] w-[17px] pb-0.5 text-[15px] leading-none text-[#333]">«</span>
          {crumbs.map(([t, w]) => (
            <div key={t} className="flex items-center justify-between whitespace-nowrap pr-2" style={{ width: w }}>
              {t}
              <svg width="5" height="8" viewBox="0 0 5 8">
                <path d="M0 0l5 4-5 4z" fill="#111" />
              </svg>
            </div>
          ))}
          <div className="ml-auto mr-[6px]">
            <Down color="#0d0d66" w={8} />
          </div>
          <div className="flex h-full w-[25px] items-center justify-center border-l border-[#4c7287]">
            <svg width="15" height="14" viewBox="0 0 15 14" fill="#2c74c4">
              <path d="M7 0v2H5v5h2.500L4 11 .5 7H3V2l2-2zM8 14v-2h2V7H7.500L11 3l3.500 4H12v5l-2 2z" />
            </svg>
          </div>
        </div>
        <div className="ml-[6px] flex h-[24px] flex-1 items-center justify-between border border-[#e2edf3] bg-[#bccdd7] pl-2 pr-1.5 italic text-[#65717a] outline-1 outline-[#3c6980]/60">
          Search GEO-Cloud Demo
          <svg width="13" height="13" viewBox="0 0 13 13" fill="none" stroke="#2a6bb8">
            <circle cx="8" cy="4.500" r="3.600" strokeWidth="1.500" />
            <path d="M5.500 7.500L1 12.500" strokeWidth="2.200" />
          </svg>
        </div>
      </div>
      <div className="relative mt-[7px] flex min-h-0 flex-1 flex-col border border-[#1b3a4c] bg-[#fcfcfc]">
        <div className="flex h-[33px] shrink-0 items-center border-b border-[#a0afc8] bg-linear-to-b from-white from-10% via-[#eef4fc] via-49% to-[#dce6f4] to-51% text-[#1e395b]">
          <div className="ml-[17px] flex w-[91px] items-center gap-2">
            Organize <Down />
          </div>
          <div className="flex w-[97px] items-center">
            <svg width="16" height="16" viewBox="0 0 16 16">
              <path d="M1 1h14v14H1z" fill="#fff" stroke="#cc4a20" strokeWidth="1.600" />
              <text x="8" y="13" textAnchor="middle" fontFamily="Liberation Serif, serif" fontWeight="700" fontSize="14" fill="#cc4a20">
                P
              </text>
            </svg>
            <span className="ml-1 mr-2.5">Open</span>
            <Down />
          </div>
          <div className="flex w-[99px] items-center gap-1.5 whitespace-nowrap">
            Share with <Down />
          </div>
          <span className="w-[55px]">Print</span>
          <span>New folder</span>
          <div className="ml-auto flex items-center pr-[14px]">
            <svg width="15" height="13" viewBox="0 0 15 13">
              <path d="M.5.5h3v3h-3zM.5 5h3v3h-3zM.5 9.500h3v3h-3z" fill="#fff" stroke="#888" />
              <path d="M6 1.500h9M6 6.500h9M6 11.500h9" stroke="#5f6f83" strokeDasharray="3.500 1" />
            </svg>
            <span className="ml-[11px] mr-[22px]">
              <Down />
            </span>
            <svg width="16" height="14" viewBox="0 0 16 14">
              <path d="M.5.5h15v13H.5z" fill="#fff" stroke="#4c5d74" />
              <path d="M1 1h14v2H1z" fill="#cfdbea" />
              <path d="M10 3h5v10h-5z" fill="#74c3dd" />
            </svg>
            <svg width="17" height="17" viewBox="0 0 17 17" className="ml-[20px]">
              <circle cx="8.500" cy="8.500" r="7.700" fill="#2746ae" stroke="#8e9ab8" strokeWidth="1.500" />
              <text x="8.500" y="13" textAnchor="middle" fontFamily="Open Sans, sans-serif" fontWeight="700" fontSize="12" fill="#fff">
                ?
              </text>
            </svg>
          </div>
        </div>
        <div className="flex min-h-0 flex-1">
          <div className="flex w-[508px] shrink-0 flex-col border-r border-[#d6e3f1] px-px pt-[8px] text-black">
            {nav.map((r, i) =>
              r ? (
                <div
                  key={i}
                  className={`flex h-[21px] items-center gap-[5px] rounded-[3px] border ${r[1] ? "pl-[27px]" : "pl-[17px]"} ${
                    r[0] === "Documents" ? "border-[#d4d4d4] bg-linear-to-b from-[#f9f9f9] to-[#e4e4e4]" : "border-transparent"
                  }`}
                >
                  <NavIcon kind={r[0]} />
                  {r[0]}
                </div>
              ) : (
                <div key={i} className="h-[21px]" />
              ),
            )}
          </div>
          <div className="flex min-w-0 flex-1 flex-col">
            <div className="flex h-[55px] shrink-0 justify-between border-b border-[#d3e3f0] bg-[linear-gradient(75deg,#fcfcfc_10%,#f1f4fa_14%,#fcfcfc_22%,#fcfcfc_30%,#f3f5fa_38%,#fcfcfc_50%)] pl-[18px]">
              <div className="pt-[5px]">
                <div className="text-[18px] leading-[25px] tracking-[-0.02em] text-[#0b7008]">Documents library</div>
                <div className="leading-[16px] text-[#5a6779]">GEO-Cloud Demo</div>
              </div>
              <div className="flex items-center pr-[37px] text-[#5a6779]">
                Arrange by: <span className="ml-3 mr-1.5 text-[#0a62c9]">Folder</span>
                <Down color="#0a62c9" />
              </div>
            </div>
            <div className="flex h-[31px] shrink-0 items-center pb-[3px] pl-[18px] text-[#5a6779]">
              <span className="w-[325px]">Name</span>
              <svg width="8" height="5" viewBox="0 0 8 5" className="-mt-[20px]">
                <path d="M0 5l4-5 4 5z" fill="#5f93b4" />
              </svg>
              <div className="ml-auto flex h-full w-[14px] items-center overflow-hidden border-l border-[#e0ebf5] pl-[6px]">D</div>
            </div>
            {files.map(([t, k, d]) => (
              <div
                key={t}
                className={`ml-[15px] flex h-[21px] shrink-0 items-center overflow-hidden rounded-l-[3px] border-y border-l pl-[2px] text-black ${
                  t === "Slide GEO-Cloud" ? "border-[#d4d4d4] bg-linear-to-b from-[#f9f9f9] to-[#e4e4e4]" : "border-transparent"
                }`}
              >
                <div className="mr-[5px] flex w-[17px]">{k === "F" ? <FolderIcon /> : <DocIcon kind={k} />}</div>
                {t}
                <span className="ml-auto w-[8px] overflow-hidden text-[#6d6d6d]">{d}</span>
              </div>
            ))}
            <div className="mt-auto flex h-[16px] items-center bg-[#efefef] px-[6px]">
              <svg width="5" height="8" viewBox="0 0 5 8">
                <path d="M5 0L0 4l5 4z" fill="#333" />
              </svg>
              <div className="ml-[8px] flex h-[15px] w-[450px] items-center justify-center gap-[2px] rounded-[2px] border border-[#8f8f8f] bg-linear-to-b from-[#f5f5f5] from-49% to-[#cbcbcf] to-51%">
                <div className="h-[7px] w-px bg-[#555]" />
                <div className="h-[7px] w-px bg-[#555]" />
                <div className="h-[7px] w-px bg-[#555]" />
              </div>
              <svg width="5" height="8" viewBox="0 0 5 8" className="ml-auto">
                <path d="M0 0l5 4-5 4z" fill="#333" />
              </svg>
            </div>
          </div>
        </div>
        <div className="flex h-[53px] shrink-0 items-start border-t border-[#cbd8e8] bg-[#f1f4fc] pl-[20px]">
          <svg width="56" height="42" viewBox="0 0 56 42" className="mt-[5px]">
            <path d="M0 0h53v39H0z" fill="#fff" stroke="#ccc" strokeWidth=".6" />
            <path d="M8 3h43v11H8z" fill="#c2d6ea" />
            <path d="M11 12l6-7 6 7M25 12l6-7 6 7M38 12l5-7 6 7" stroke="#4f9b5c" fill="none" />
            <path d="M8 16h43v17H8z" fill="#fbe3d0" />
            <path d="M10 20h6v4h-6zM18 19h7v4h-7zM27 18h8v4h-8zM37 22h7v4h-7zM27 27h12v4H27z" fill="#cf6a1e" />
            <path d="M19 9v10M30 9v10" stroke="#405a90" />
            <path d="M2 5h3v3H2zM2 13h3v3H2zM2 21h3v3H2zM2 29h3v3H2z" fill="#7a8796" />
            <path d="M41 27h14v14H41z" fill="#fbe8de" stroke="#dc7448" />
            <text x="47" y="39" textAnchor="middle" fontFamily="Liberation Serif, serif" fontWeight="700" fontSize="13" fill="#d24a1e">
              P
            </text>
          </svg>
          <div className="ml-[15px] mt-[5px] flex w-[187px] flex-col whitespace-nowrap">
            <span className="text-[13px] leading-[18px] text-black">Slide GEO-Cloud</span>
            <span className="leading-[18px] text-[#5a6779]">Microsoft PowerPoint Presentation</span>
          </div>
          <div className="mt-[5px] grid grid-cols-[48px_135px_75px_102px_90px_108px_105px_100px] gap-x-[5px] whitespace-nowrap leading-[18px]">
            <Field label="Title:" value="PowerPoint Presentation" />
            <Field label="Size:" value="616 KB" />
            <Field label="Tags:" value="Add a tag" />
            <Field label="Content status:" value="Add text" />
            <Field label="Authors:" value="Jonathan Becedas Rodrí..." />
            <Field label="Date modified:" value="03/06/2014 13:44" />
            <Field label="Categories:" value="Add a category" />
          </div>
        </div>
      </div>
    </div>
  );
}

export default function App() {
  return (
    <div className="flex h-[1080px] w-[3286px] overflow-hidden bg-black font-['Open_Sans',sans-serif] text-[12px] tracking-[-0.035em]">
      <LeftScreen />
      <div className="relative mt-[84px] h-[768px] w-[1366px] overflow-hidden bg-[radial-gradient(ellipse_75%_110%_at_48%_110%,#009ddc_0%,#0090d0_40%,#006fa8_62%,#004f7a_88%,#003a5f_100%)]">
        <Explorer />
      </div>
    </div>
  );
}
